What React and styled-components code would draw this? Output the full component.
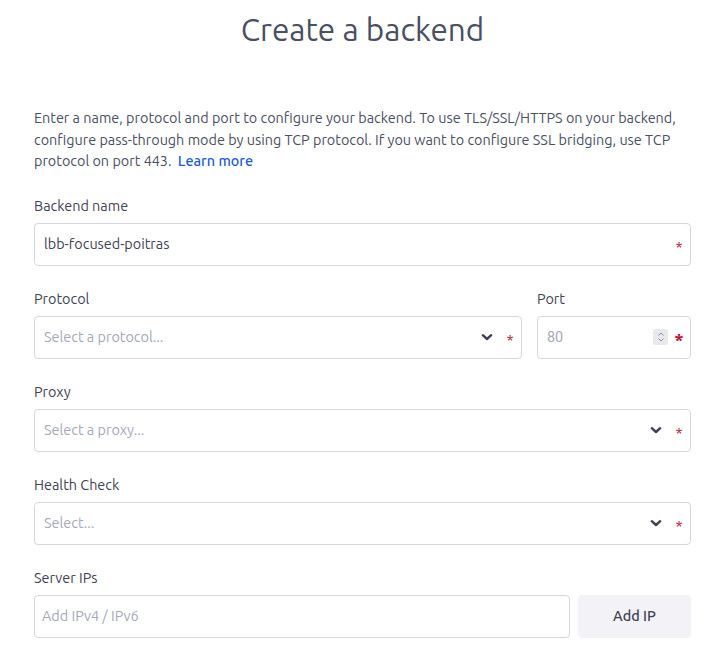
import React from "react";
import styled, { createGlobalStyle } from "styled-components";

const Global = createGlobalStyle`
  html, body { margin: 0; padding: 0; background: #fff; }
  body { font-family: "Ubuntu", "Lato", "Noto Sans", sans-serif; color: #3f4254; }
  * { box-sizing: border-box; }
`;

const Page = styled.div`
  width: 710px;
  padding: 0 19px 0 34px;
`;

const Title = styled.h1`
  margin: 0;
  padding-top: 9px;
  height: 108px;
  text-align: center;
  font-size: 31.5px;
  font-weight: 400;
  color: #4a4f62;
  line-height: 42px;
`;

const Desc = styled.p`
  margin: 0 0 24px;
  font-size: 14.4px;
  line-height: 21.5px;
  color: #4a4f62;
`;

const Link = styled.a`
  display: inline-block;
  color: #1c5bd6;
  font-weight: 500;
  text-decoration: none;
  margin-left: 3px;
`;

const Row = styled.div`
  display: flex;
  gap: ${(p) => p.$gap || 15}px;
  margin-bottom: ${(p) => (p.$last ? 0 : 24)}px;
`;

const Field = styled.div`
  flex: ${(p) => p.$flex || 1};
  display: flex;
  flex-direction: column;
  min-width: 0;
`;

const Label = styled.label`
  font-size: 14.4px;
  line-height: 18px;
  color: #3f4254;
  margin-bottom: 8px;
`;

const Box = styled.div`
  height: 43px;
  border: 1px solid #d4d6e2;
  border-radius: 4px;
  display: flex;
  align-items: center;
  padding: 0 ${(p) => p.$pr ?? 6}px 0 ${(p) => p.$pl ?? 9}px;
  gap: 9px;
  font-size: 14.4px;
`;

const Value = styled.span`
  flex: 1;
  color: ${(p) => (p.$placeholder ? "#a5a8b8" : "#3f4254")};
  font-family: ${(p) => (p.$num ? "Roboto, sans-serif" : "inherit")};
  white-space: nowrap;
  overflow: hidden;
`;

const Star = styled.span`
  color: #b3163a;
  font-size: ${(p) => (p.$big ? 19 : 15)}px;
  font-weight: ${(p) => (p.$big ? 700 : 400)};
  width: 10px;
  text-align: center;
  margin-left: ${(p) => (p.$big ? -3 : 3)}px;
  line-height: 1;
  padding-top: ${(p) => (p.$big ? 6 : 4)}px;
`;

const Spinner = styled.span`
  width: 15px;
  height: 16px;
  background: #e8e9ee;
  border-radius: 2px;
  display: flex;
  align-items: center;
  justify-content: center;
`;

const Button = styled.button`
  width: 113px;
  height: 43px;
  border: none;
  border-radius: 4px;
  background: #f3f3f7;
  color: #3f4254;
  font-family: inherit;
  font-size: 14.4px;
  font-weight: 500;
`;

const Chevron = () => (
  <svg width="12" height="12" viewBox="0 0 12 12">
    <path d="M1.8 4.2 L6 8 L10.2 4.2" fill="none" stroke="#3f4254" strokeWidth="2.4" strokeLinecap="round" strokeLinejoin="round" />
  </svg>
);

const Arrows = () => (
  <svg width="8" height="12" viewBox="0 0 8 12">
    <path d="M1.5 4.5 L4 2 L6.5 4.5 M1.5 7.5 L4 10 L6.5 7.5" fill="none" stroke="#8a8ea0" strokeWidth="1" />
  </svg>
);

export default function App() {
  return (
    <>
      <Global />
      <Page>
        <Title>Create a backend</Title>
        <Desc>
          Enter a name, protocol and port to configure your backend. To use TLS/SSL/HTTPS on your backend,
          configure pass-through mode by using TCP protocol. If you want to configure SSL bridging, use TCP
          protocol on port 443. <Link href="#">Learn more</Link>
        </Desc>
        <Row>
          <Field>
            <Label>Backend name</Label>
            <Box>
              <Value>lbb-focused-poitras</Value>
              <Star>*</Star>
            </Box>
          </Field>
        </Row>
        <Row>
          <Field $flex={488}>
            <Label>Protocol</Label>
            <Box>
              <Value $placeholder>Select a protocol...</Value>
              <Chevron />
              <Star>*</Star>
            </Box>
          </Field>
          <Field $flex={154}>
            <Label>Port</Label>
            <Box>
              <Value $placeholder $num>80</Value>
              <Spinner><Arrows /></Spinner>
              <Star $big>*</Star>
            </Box>
          </Field>
        </Row>
        <Row>
          <Field>
            <Label>Proxy</Label>
            <Box>
              <Value $placeholder>Select a proxy...</Value>
              <Chevron />
              <Star>*</Star>
            </Box>
          </Field>
        </Row>
        <Row>
          <Field>
            <Label>Health Check</Label>
            <Box>
              <Value $placeholder>Select...</Value>
              <Chevron />
              <Star>*</Star>
            </Box>
          </Field>
        </Row>
        <Row>
          <Field>
            <Label>Server IPs</Label>
            <Row $gap={8} $last>
              <Field>
                <Box $pl={7}>
                  <Value $placeholder>Add IPv4 / IPv6</Value>
                </Box>
              </Field>
              <Button>Add IP</Button>
            </Row>
          </Field>
        </Row>
      </Page>
    </>
  );
}
